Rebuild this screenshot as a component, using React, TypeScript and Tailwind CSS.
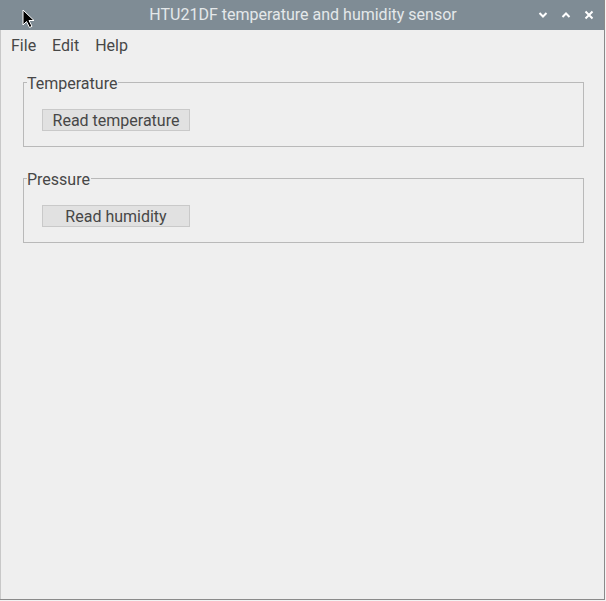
import React from 'react';

const font = { fontFamily: 'Roboto, "Liberation Sans", sans-serif' };

const GroupBox: React.FC<{ title: string; button: string }> = ({ title, button }) => (
  <div className="relative ml-[22px] mr-[20px] h-[65px] border border-[#b9b9b9]">
    <span className="absolute left-[3px] top-[-9px] bg-[#efefef] pr-[1px] text-[16px] leading-[20px] text-[#474747]">
      {title}
    </span>
    <div className="pl-[18px] pt-[26px]">
      <button className="flex h-[22px] w-[148px] items-center justify-center border border-[#c9c9c9] bg-[#e1e1e1] pt-[1px] text-[16px] leading-none text-[#474747]">
        {button}
      </button>
    </div>
  </div>
);

export default function App() {
  return (
    <div className="relative h-[601px] w-[606px] bg-[#f3f3f3]" style={font}>
      <div className="flex h-[600px] w-[605px] flex-col border-r border-b border-[#8a8a8a] bg-[#efefef]">
        <div className="relative flex h-[30px] shrink-0 items-center justify-center bg-[#7f8c95] text-[16px] text-[#e4e8ea]">
          <span className="ml-[2px]">HTU21DF temperature and humidity sensor</span>
          <div className="absolute right-[10px] top-0 flex h-[30px] items-center gap-[13px] text-white">
            <svg width="10" height="8" viewBox="0 0 10 8">
              <path d="M1.5 2 L5 5.5 L8.5 2" stroke="#fff" strokeWidth="2" fill="none" />
            </svg>
            <svg width="10" height="8" viewBox="0 0 10 8">
              <path d="M1.5 6 L5 2.5 L8.5 6" stroke="#fff" strokeWidth="2" fill="none" />
            </svg>
            <svg width="10" height="10" viewBox="0 0 10 10">
              <path d="M1.5 1.5 L8.5 8.5 M8.5 1.5 L1.5 8.5" stroke="#fff" strokeWidth="2" fill="none" />
            </svg>
          </div>
        </div>
        <div className="flex flex-1 flex-col border-l border-[#c8c8c8]">
          <div className="flex h-[30px] items-center gap-[16px] pl-[10px] pt-[2px] text-[16px] text-[#474747]">
            <span>File</span>
            <span>Edit</span>
            <span>Help</span>
          </div>
          <div className="mt-[22px] flex flex-col gap-[31px]">
            <GroupBox title="Temperature" button="Read temperature" />
            <GroupBox title="Pressure" button="Read humidity" />
          </div>
        </div>
      </div>
      <svg className="absolute left-[22px] top-[9px]" width="14" height="20" viewBox="0 0 14 20">
        <path d="M1 1 L1 16 L4.5 12.5 L7.5 18.5 L10 17.3 L7 11.5 L12 11.5 Z" fill="#000" stroke="#fff" strokeWidth="1" />
      </svg>
    </div>
  );
}
